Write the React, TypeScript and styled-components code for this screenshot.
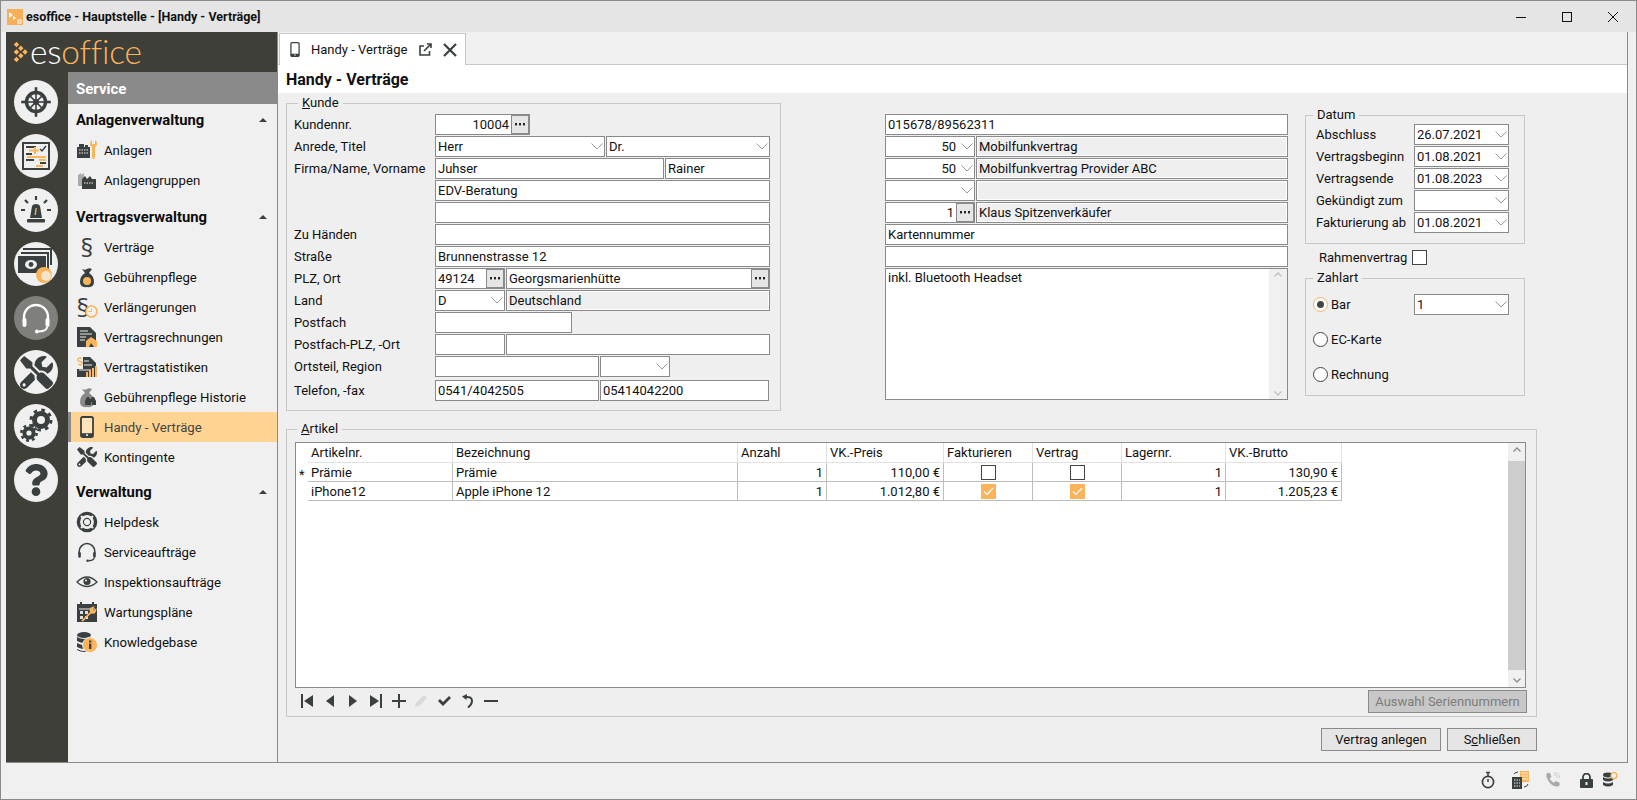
import React from 'react';
import styled, { createGlobalStyle } from 'styled-components';
import { FaTools, FaQuestion } from 'react-icons/fa';

const INK = '#3a3f3f';
const ORANGE = '#fbb45c';

const Global = createGlobalStyle`
  html, body { margin: 0; padding: 0; background: #f0f0f0; }
  * { box-sizing: border-box; }
  body { font-family: Roboto, "Liberation Sans", sans-serif; font-size: 13px; color: #111; }
`;

const Win = styled.div`
  width: 1637px; height: 800px; border: 1px solid #8a8a8a; display: flex; flex-direction: column;
  overflow: hidden; background: #f0f0f0;
`;
const TitleBar = styled.div`
  height: 31px; flex: none; background: #e5e5e5; display: flex; align-items: center; padding-left: 6px;
`;
const TitleText = styled.div`
  font-weight: 700; font-size: 12.5px; margin-left: 3px; flex: 1; white-space: nowrap;
`;
const WinBtn = styled.div`
  width: 46px; height: 31px; display: flex; align-items: center; justify-content: center;
`;
const Body = styled.div`
  height: 731px; flex: none; margin: 0 8px 0 5px; display: flex; border-bottom: 1px solid #8a8a8a;
`;
const Sidebar = styled.div`
  width: 271px; flex: none; display: flex; flex-direction: column; background: #3f3f3a;
`;
const LogoBar = styled.div`
  height: 40px; flex: none; display: flex; align-items: center; padding-left: 8px; gap: 2px;
`;
const LogoText = styled.div`
  font-family: Lato, "Open Sans", sans-serif; font-weight: 300; font-size: 33.5px; line-height: 40px; color: ${ORANGE};
  letter-spacing: -0.2px; margin-top: -2px;
  span { color: #fff; }
`;
const SideBody = styled.div` flex: 1; display: flex; min-height: 0; `;
const Rail = styled.div`
  width: 62px; flex: none; padding: 8px 0 0 8px; display: flex; flex-direction: column; gap: 10px;
`;
const RailBtn = styled.div<{ $active?: boolean }>`
  width: 44px; height: 44px; border-radius: 50%; display: flex; align-items: center; justify-content: center;
  background: ${p => (p.$active ? '#7f7f7b' : '#f0f0f0')}; color: ${INK}; font-size: 30px;
`;
const Nav = styled.div` flex: 1; background: #f0f0f0; display: flex; flex-direction: column; `;
const NavHead = styled.div`
  height: 32px; flex: none; background: #8a8a8a; color: #fff; font-weight: 700; font-size: 15px;
  display: flex; align-items: center; padding: 2px 0 0 8px;
`;
const Section = styled.div<{ $mt: number }>`
  height: 30px; flex: none; display: flex; align-items: center; justify-content: space-between;
  padding: 0 10px 0 8px; font-weight: 700; font-size: 14.8px; color: #0d0d0d; margin-top: ${p => p.$mt}px;
  &::after { content: ''; border-left: 4px solid transparent; border-right: 4px solid transparent; border-bottom: 4px solid ${INK}; }
`;
const Item = styled.div<{ $active?: boolean }>`
  height: 30px; flex: none; display: flex; align-items: center; padding-left: 8px; gap: 6px; font-size: 13.2px;
  background: ${p => (p.$active ? '#ffd391' : 'transparent')};
  box-shadow: ${p => (p.$active ? 'inset 3px 0 0 #8a8a8a' : 'none')};
  color: ${p => (p.$active ? '#444' : '#111')};
`;
const ItemIcon = styled.span`
  position: relative; width: 22px; height: 24px; flex: none; display: flex; align-items: center; justify-content: center; color: ${INK}; font-size: 21px;
`;
const Para = styled.span<{ $shift?: boolean }>`
  font-family: "Open Sans", sans-serif; font-size: 25px; line-height: 24px; color: ${INK}; margin-left: ${p => (p.$shift ? -8 : 0)}px;
`;
const ClockBadge = styled.svg`
  position: absolute; right: 0; bottom: 1px;
`;

const Main = styled.div`
  flex: 1; display: flex; flex-direction: column; border-left: 1px solid #8a8a8a; border-right: 1px solid #8a8a8a; min-width: 0;
`;
const TabStrip = styled.div`
  height: 33px; flex: none; border-bottom: 1px solid #c8c8c8; padding: 1px 0 0 1px; display: flex;
`;
const Tab = styled.div`
  width: 187px; height: 32px; background: #fff; border: 1px solid #c8c8c8; border-bottom: none; display: flex; align-items: center;
  padding-left: 10px; font-size: 13px;
`;
const TabLabel = styled.span` margin-left: 11px; margin-right: 12px; white-space: nowrap; `;
const TabClose = styled.svg` margin-left: 11px; `;
const PageTitle = styled.div`
  height: 28px; flex: none; background: #fff; padding-left: 8px; font-weight: 700; font-size: 16px; display: flex; align-items: center;
`;
const Content = styled.div`
  flex: 1; background: #efefef; padding: 10px 90px 0 8px; display: flex; flex-direction: column; min-height: 0;
`;
const TopRow = styled.div` display: flex; align-items: flex-start; flex: none; `;

const Group = styled.div<{ $w: number; $h: number }>`
  position: relative; width: ${p => p.$w}px; height: ${p => p.$h}px; flex: none; border: 1px solid #c8c8c8;
`;
const Legend = styled.div<{ $l: number }>`
  position: absolute; top: -9px; left: ${p => p.$l}px; padding: 0 4px; height: 16px; line-height: 16px; background: #efefef; font-size: 13px;
`;
const Stack = styled.div<{ $pt: number; $pl: number }>`
  display: flex; flex-direction: column; gap: 1px; padding: ${p => p.$pt}px 0 0 ${p => p.$pl}px;
`;
const Row = styled.div<{ $mt?: number }>`
  display: flex; gap: 1px; height: 21px; flex: none; align-items: stretch; margin-top: ${p => p.$mt ?? 0}px;
`;
const Label = styled.div<{ $w: number }>`
  width: ${p => p.$w}px; flex: none; display: flex; align-items: center; white-space: nowrap; font-size: 13px;
`;
const Field = styled.div<{ $w?: number; $ro?: boolean }>`
  ${p => (p.$w ? `width:${p.$w}px; flex:none;` : 'flex:1;')}
  height: 21px; border: 1px solid #8a8a8a; background: ${p => (p.$ro ? '#efefef' : '#fff')};
  box-shadow: ${p => (p.$ro ? 'inset 0 0 0 1px #fff' : 'none')};
  display: flex; align-items: center; padding-left: 2px; font-size: 13px; white-space: nowrap; overflow: hidden;
`;
const FieldText = styled.span<{ $right?: boolean }>`
  flex: 1; text-align: ${p => (p.$right ? 'right' : 'left')}; min-width: 0;
`;
const More = styled.span`
  width: 18px; height: 19px; flex: none; margin-left: 2px; background: #e6e6e6; border: 1px solid #8a8a8a;
  display: flex; align-items: center; justify-content: center;
`;
const Chev = styled.svg` flex: none; margin: 0 1px 0 5px; `;

const MidCol = styled.div`
  width: 403px; flex: none; margin: 11px 0 0 104px; display: flex; flex-direction: column; gap: 1px;
`;
const TextArea = styled.div`
  height: 132px; border: 1px solid #8a8a8a; background: #fff; display: flex; margin-top: 0;
`;
const AreaText = styled.div` flex: 1; padding: 1px 2px; `;
const VBar = styled.div<{ $w: number }>`
  width: ${p => p.$w}px; flex: none; background: #f0f0f0; display: flex; flex-direction: column; align-items: center; justify-content: space-between; padding: 3px 0;
`;
const RightCol = styled.div`
  width: 220px; flex: none; margin: 12px 0 0 17px; display: flex; flex-direction: column;
`;
const CheckRow = styled.div`
  height: 15px; margin: 6px 0 13px; padding-left: 14px; display: flex; align-items: center;
`;
const Box = styled.span<{ $on?: boolean }>`
  width: 15px; height: 15px; flex: none; display: inline-flex; align-items: center; justify-content: center;
  border: 1px solid ${p => (p.$on ? ORANGE : '#444')}; background: ${p => (p.$on ? ORANGE : '#fff')};
`;
const RadioStack = styled.div`
  display: flex; flex-direction: column; gap: 14px; padding: 15px 0 0 7px;
`;
const RadioRow = styled.div` display: flex; align-items: center; height: 21px; `;
const Radio = styled.span<{ $on?: boolean }>`
  width: 15px; height: 15px; flex: none; border-radius: 50%; background: #fff; margin-right: 3px;
  border: 1px solid ${p => (p.$on ? ORANGE : '#444')}; display: flex; align-items: center; justify-content: center;
  &::after { content: ''; width: 7px; height: 7px; border-radius: 50%; background: ${p => (p.$on ? '#444' : 'transparent')}; }
`;

const ArtGroup = styled(Group)` margin-top: 18px; padding: 12px 0 0 8px; display: flex; flex-direction: column; `;
const TableBox = styled.div`
  width: 1231px; height: 246px; flex: none; border: 1px solid #8a8a8a; background: #fff; display: flex;
`;
const TableArea = styled.div` flex: 1; min-width: 0; `;
const GridRow = styled.div<{ $h: number }>`
  display: grid; grid-template-columns: 12px 145px 285px 89px 117px 89px 89px 104px 116px; width: 1046px; height: ${p => p.$h}px;
`;
const Cell = styled.div<{ $right?: boolean; $center?: boolean; $head?: boolean; $stub?: boolean }>`
  display: flex; align-items: center; padding: 0 3px; white-space: nowrap; font-size: 13px;
  justify-content: ${p => (p.$right ? 'flex-end' : p.$center ? 'center' : 'flex-start')};
  border-right: ${p => (p.$stub ? 'none' : p.$head ? '1px solid #e2e2e2' : '1px solid #bdbdbd')};
  border-bottom: ${p => (p.$stub ? 'none' : p.$head ? '1px solid #e2e2e2' : '1px solid #bdbdbd')};
`;
const Stub = styled(Cell)` padding: 4px 0 0 3px; `;
const Thumb = styled.div` width: 17px; height: 209px; background: #cdcdcd; margin: 0; `;
const ScrollCol = styled.div`
  width: 17px; flex: none; background: #f0f0f0; display: flex; flex-direction: column; align-items: center; padding: 4px 0; justify-content: space-between;
`;
const ToolRow = styled.div`
  height: 25px; flex: none; display: flex; align-items: center; margin-top: 1px; width: 1232px;
`;
const ToolIcon = styled.span` width: 23px; height: 23px; flex: none; margin-top: -2px; display: flex; align-items: center; justify-content: center; `;
const Spacer = styled.div` flex: 1; `;
const Button = styled.button<{ $w: number; $off?: boolean }>`
  width: ${p => p.$w}px; height: 23px; flex: none; border: 1px solid #8a8a8a; padding: 0; font: inherit; font-size: 13px;
  background: ${p => (p.$off ? '#c8c8c8' : '#e5e5e5')}; color: ${p => (p.$off ? '#7c7c7c' : '#111')};
`;
const Actions = styled.div` display: flex; justify-content: flex-end; gap: 6px; margin-top: 11px; `;
const StatusBar = styled.div`
  flex: 1; display: flex; justify-content: flex-end; align-items: center; padding: 0 16px 2px 0;
`;
const StatusIcon = styled.span<{ $w: number }>`
  width: ${p => p.$w}px; flex: none; display: flex; justify-content: center; align-items: center;
`;

const Chevron = () => (
  <Chev width="12" height="7" viewBox="0 0 12 7"><polyline points="0.5,0.5 6,6 11.5,0.5" fill="none" stroke="#9a9a9a" /></Chev>
);
const Dots = () => (
  <svg width="10" height="3" viewBox="0 0 10 3"><rect x="0" y="0" width="2" height="2.4" fill="#222" /><rect x="4" y="0" width="2" height="2.4" fill="#222" /><rect x="8" y="0" width="2" height="2.4" fill="#222" /></svg>
);
const Sel = ({ w, text, right }: { w?: number; text?: string; right?: boolean }) => (
  <Field $w={w}><FieldText $right={right}>{text}</FieldText><Chevron /></Field>
);
const Txt = ({ w, text, ro }: { w?: number; text?: string; ro?: boolean }) => (
  <Field $w={w} $ro={ro}><FieldText>{text}</FieldText></Field>
);
const Mor = ({ w, text, right }: { w?: number; text: string; right?: boolean }) => (
  <Field $w={w}><FieldText $right={right}>{text}</FieldText><More><Dots /></More></Field>
);
const Chk = ({ on }: { on?: boolean }) => (
  <Box $on={on}>{on && <svg width="11" height="9" viewBox="0 0 11 9"><polyline points="1,4.5 4,7.5 10,1" fill="none" stroke="#fff" strokeWidth="1.2" /></svg>}</Box>
);

/* ---------- drawn icons ---------- */
const I = ({ children, s = 22, v = 22 }: { children: React.ReactNode; s?: number; v?: number }) => (
  <svg width={s} height={s} viewBox={`0 0 ${v} ${v}`}>{children}</svg>
);
const Logo = () => (
  <svg width="14" height="20" viewBox="0 0 14 20" fill={ORANGE}>
    {[[2.5, 2.5], [2.5, 10], [2.5, 17.5], [6.8, 6.2], [6.8, 13.8], [11, 10]].map(([x, y], i) => (
      <rect key={i} x={x - 1.9} y={y - 1.9} width="3.8" height="3.8" transform={`rotate(45 ${x} ${y})`} />
    ))}
  </svg>
);
const AppIcon = () => (
  <svg width="16" height="16" viewBox="0 0 16 16"><rect width="16" height="16" fill="#f6ae58" /><path d="M2 3l4 3-4 3zM6 7l3 2-3 2z" fill="#fff" /><rect x="11" y="11" width="3" height="3" fill="none" stroke="#fff" /></svg>
);
const WheelIcon = () => (
  <I s={32} v={32}>
    <circle cx="16" cy="16" r="9.5" fill="none" stroke={INK} strokeWidth="3.4" />
    <circle cx="16" cy="16" r="3" fill={INK} />
    {[0, 45, 90, 135, 180, 225, 270, 315].map(a => (
      <g key={a} transform={`rotate(${a} 16 16)`}>
        <path d="M16 16V7" stroke={INK} strokeWidth="1.6" />
        <path d="M16 6V1.2" stroke={INK} strokeWidth={a % 90 === 0 ? 2.6 : 0} />
      </g>
    ))}
  </I>
);
const BoardIcon = () => (
  <I s={30} v={30}>
    <rect x="2" y="2" width="26" height="26" fill="none" stroke={INK} strokeWidth="2" />
    <path d="M5 6h10M5 13h6M5 19h8M19 22h6" stroke={INK} strokeWidth="2" />
    <path d="M8 9.5h10M14 6v7M6 16h19M18 19h7M15 25h7" stroke={ORANGE} strokeWidth="2" fill="none" />
    <path d="M19 8l2 2 4-5" stroke={INK} strokeWidth="1.5" fill="none" />
  </I>
);
const SirenIcon = () => (
  <I s={34} v={34}>
    <path d="M11 25l2-12q1-2 4-2t4 2l2 12z" fill={INK} />
    <path d="M15.5 22l1-7h1.4l-1 7z" fill="#e8b36a" />
    <rect x="8" y="26" width="18" height="3.5" rx="1" fill={INK} />
    <path d="M17 3v4M6 7l3 3M28 7l-3 3M2 17h4M28 17h4" stroke={INK} strokeWidth="2.2" />
  </I>
);
const MoneyIcon = () => (
  <I s={40} v={40}>
    <path d="M7 4h29v17h-2V6H7z" fill={INK} />
    <path d="M5 8h28v17h-2V10H5z" fill={INK} />
    <rect x="2" y="12" width="28" height="17" fill={INK} />
    <ellipse cx="15" cy="20.5" rx="6" ry="4.5" fill="#f0f0f0" />
    <circle cx="15" cy="20.5" r="2.4" fill={INK} />
    <circle cx="28" cy="31" r="8" fill={ORANGE} />
    <circle cx="30" cy="32" r="5" fill="#f6e4c8" />
  </I>
);
const HeadsetIcon = ({ color = '#fff', s = 34 }: { color?: string; s?: number }) => (
  <I s={s} v={34}>
    <path d="M5 21V16a12 12 0 0 1 24 0v5" fill="none" stroke={color} strokeWidth="2.4" />
    <rect x="3.5" y="17" width="4" height="9" rx="2" fill={color} />
    <rect x="26.5" y="17" width="4" height="9" rx="2" fill={color} />
    <path d="M28 26q0 4-8 4.5" fill="none" stroke={color} strokeWidth="2" />
    <circle cx="18" cy="30.5" r="2" fill={color} />
  </I>
);
const GearsIcon = () => (
  <I s={36} v={36}>
    <circle cx="23" cy="12" r="6.5" fill="none" stroke={INK} strokeWidth="5" />
    <circle cx="23" cy="12" r="10" fill="none" stroke={INK} strokeWidth="3" strokeDasharray="3.6 4.25" />
    <circle cx="11" cy="25" r="4.6" fill="none" stroke={INK} strokeWidth="4" />
    <circle cx="11" cy="25" r="7.6" fill="none" stroke={INK} strokeWidth="2.6" strokeDasharray="2.8 3.17" />
  </I>
);
const RegisterIcon = () => (
  <I>
    <rect x="1" y="8" width="13" height="11" fill={INK} />
    <rect x="3" y="5" width="5" height="3" fill={INK} />
    <rect x="9" y="6" width="3" height="2" fill={INK} />
    <path d="M3 11h9M3 14h9" stroke="#eee" strokeDasharray="1.5 1" />
    <path d="M16 8v10q0 2 1.5 2t1.5-2V8q2-1 2-3.5T19 1v4h-3V1q-2 1-2 3.5T16 8z" fill={ORANGE} />
  </I>
);
const GroupIcon = () => (
  <I>
    <path d="M2 6l3-2v13H2zM5 6l3-2v13H5z" fill="#aaa" />
    <path d="M6 10l3-3 2 3 3-3 2 3h4v10H6z" fill={INK} />
    <path d="M8 14h10" stroke="#eee" strokeDasharray="1.5 1" />
  </I>
);
const BagIcon = ({ body = INK }: { body?: string }) => (
  <path d="M6 3q3 1.5 5 0t5 0l-3 4q5 3 5 9t-7 5q-7 1-7-5t5-9z" fill={body} />
);
const FeeIcon = () => (
  <I>
    <BagIcon />
    <circle cx="11" cy="15" r="4" fill={ORANGE} />
  </I>
);
const InvoiceIcon = () => (
  <I>
    <path d="M1 1h13l6 6v14H1z" fill={INK} />
    <path d="M4 5h8M4 8h12M4 11h6M4 14h5" stroke="#f0f0f0" />
    <path d="M10 21v-6l5-4 6 4v6h-3l-3-4-2 4z" fill={ORANGE} />
  </I>
);
const StatIcon = () => (
  <I>
    <path d="M1 1h13l6 6v14H1z" fill={INK} />
    <rect x="1" y="1" width="6" height="12" fill="#f0f0f0" />
    <path d="M6 3q-3-2-4 0t2 2.5 2 2.5-4 0" fill="none" stroke={ORANGE} strokeWidth="1.4" />
    <path d="M8 5h5M8 9h8M3 14h12" stroke="#f0f0f0" />
    <path d="M10 16h2v5h-2zM13 14h2v7h-2zM16 12h2v9h-2zM19 10h2v11h-2z" fill={ORANGE} />
  </I>
);
const HistIcon = () => (
  <I>
    <BagIcon body="#8a8a8a" />
    <path d="M9 19v-4l2-4h2l1 2h1l1-2h2l2 4v4h-4v-3h-1v3z" fill={INK} />
  </I>
);
const PhoneIcon = ({ fill = '#ffe4b9', w = 14, h = 22 }: { fill?: string; w?: number; h?: number }) => (
  <svg width={w} height={h} viewBox="0 0 14 22">
    <rect x="1" y="1" width="12" height="20" rx="1.6" fill={fill} stroke={INK} strokeWidth="1.8" />
    <rect x="1" y="17.2" width="12" height="3.8" fill={INK} />
    <circle cx="7" cy="19.1" r="1" fill="#fff" />
  </svg>
);
const BuoyIcon = () => (
  <I>
    <circle cx="11" cy="11" r="8.6" fill="none" stroke={INK} strokeWidth="3.4" />
    <circle cx="11" cy="11" r="3.6" fill="#f0f0f0" stroke={INK} strokeWidth="1.2" />
    <path d="M5 5l3 3M17 5l-3 3M5 17l3-3M17 17l-3-3" stroke="#f0f0f0" strokeWidth="2" />
  </I>
);
const EyeIcon = () => (
  <I>
    <path d="M1 11q10-10 20 0q-10 9-20 0z" fill="none" stroke={INK} strokeWidth="1.3" />
    <circle cx="11" cy="10.5" r="3.6" fill={INK} />
    <circle cx="10" cy="9.4" r="1" fill="#f0f0f0" />
  </I>
);
const PlanIcon = () => (
  <I>
    <rect x="1" y="3" width="20" height="18" fill={INK} />
    <path d="M5 1v3M17 1v3" stroke={INK} strokeWidth="2" />
    <path d="M3 8h16" stroke="#f0f0f0" />
    <path d="M4 10h3v3H4zM9 10h3v3H9zM4 15h3v3H4zM9 15h3v3H9z" fill="#ddd" />
    <path d="M5 20l9-9q-1-3 1-4.5t4-1l-2.5 2.5 1.5 1.5 2.5-2.5q.5 2.5-1 4.5t-4.5 1l-8 8z" fill={ORANGE} />
  </I>
);
const KnowIcon = () => (
  <I>
    <ellipse cx="8" cy="4" rx="7" ry="3" fill={INK} />
    <path d="M1 6q7 4 14 0v4q-7 4-14 0zM1 12q7 4 14 0v4q-7 4-14 0zM1 18q7 4 14 0v1q-7 4-14 0z" fill={INK} />
    <circle cx="14" cy="14" r="7.5" fill={ORANGE} stroke="#f0f0f0" strokeWidth=".8" />
    <rect x="13" y="12.5" width="2.4" height="5.5" fill={INK} />
    <rect x="13" y="9.5" width="2.4" height="2" fill={INK} />
  </I>
);

const tools: React.ReactNode[] = [
  <I s={14} v={14}><rect x="1" y="0" width="2" height="14" fill={INK} /><path d="M13 1v12L4 7z" fill={INK} /></I>,
  <I s={14} v={14}><path d="M11 1v12L3 7z" fill={INK} /></I>,
  <I s={14} v={14}><path d="M3 1v12l8-6z" fill={INK} /></I>,
  <I s={14} v={14}><rect x="11" y="0" width="2" height="14" fill={INK} /><path d="M1 1v12l9-6z" fill={INK} /></I>,
  <I s={14} v={14}><path d="M0 6h14v2H0zM6 0h2v14H6z" fill={INK} /></I>,
  <I s={15} v={15}><path d="M1 14l1-4 8-8 3 3-8 8z" fill="#d9d9d9" /></I>,
  <I s={15} v={15}><path d="M1 8l2-2 3 3 6-6 2 2-8 8z" fill={INK} /></I>,
  <I s={14} v={14}><path d="M1 2.5L6 0l-.5 6z" fill={INK} /><path d="M4.5 3Q11 2.2 11 7 11 10.5 7 13.5" fill="none" stroke={INK} strokeWidth="2" /></I>,
  <I s={14} v={14}><rect y="6" width="14" height="2" fill={INK} /></I>,
];

type Col = { t?: string; r?: boolean; c?: 'on' | 'off' };
const rows: Col[][] = [
  [{ t: 'Prämie' }, { t: 'Prämie' }, { t: '1', r: true }, { t: '110,00 €', r: true }, { c: 'off' }, { c: 'off' }, { t: '1', r: true }, { t: '130,90 €', r: true }],
  [{ t: 'iPhone12' }, { t: 'Apple iPhone 12' }, { t: '1', r: true }, { t: '1.012,80 €', r: true }, { c: 'on' }, { c: 'on' }, { t: '1', r: true }, { t: '1.205,23 €', r: true }],
];
const heads = ['Artikelnr.', 'Bezeichnung', 'Anzahl', 'VK.-Preis', 'Fakturieren', 'Vertrag', 'Lagernr.', 'VK.-Brutto'];
const dates: [string, string][] = [['Abschluss', '26.07.2021'], ['Vertragsbeginn', '01.08.2021'], ['Vertragsende', '01.08.2023'], ['Gekündigt zum', ''], ['Fakturierung ab', '01.08.2021']];

export default function App() {
  return (
    <>
      <Global />
      <Win>
        <TitleBar>
          <AppIcon />
          <TitleText>esoffice - Hauptstelle - [Handy - Verträge]</TitleText>
          <WinBtn><svg width="10" height="10" viewBox="0 0 10 10"><rect y="5" width="10" height="1" fill="#111" /></svg></WinBtn>
          <WinBtn><svg width="10" height="10" viewBox="0 0 10 10"><rect x=".5" y=".5" width="9" height="9" fill="none" stroke="#111" /></svg></WinBtn>
          <WinBtn><svg width="10" height="10" viewBox="0 0 10 10"><path d="M0 0l10 10M10 0L0 10" stroke="#111" /></svg></WinBtn>
        </TitleBar>
        <Body>
          <Sidebar>
            <LogoBar><Logo /><LogoText><span>es</span>office</LogoText></LogoBar>
            <SideBody>
              <Rail>
                <RailBtn><WheelIcon /></RailBtn>
                <RailBtn><BoardIcon /></RailBtn>
                <RailBtn><SirenIcon /></RailBtn>
                <RailBtn><MoneyIcon /></RailBtn>
                <RailBtn $active><HeadsetIcon /></RailBtn>
                <RailBtn><FaTools size={33} /></RailBtn>
                <RailBtn><GearsIcon /></RailBtn>
                <RailBtn><FaQuestion size={32} /></RailBtn>
              </Rail>
              <Nav>
                <NavHead>Service</NavHead>
                <Section $mt={1}>Anlagenverwaltung</Section>
                <Item><ItemIcon><RegisterIcon /></ItemIcon>Anlagen</Item>
                <Item><ItemIcon><GroupIcon /></ItemIcon>Anlagengruppen</Item>
                <Section $mt={7}>Vertragsverwaltung</Section>
                <Item><ItemIcon><Para>§</Para></ItemIcon>Verträge</Item>
                <Item><ItemIcon><FeeIcon /></ItemIcon>Gebührenpflege</Item>
                <Item>
                  <ItemIcon>
                    <Para $shift>§</Para>
                    <ClockBadge width="13" height="13" viewBox="0 0 13 13">
                      <circle cx="6.5" cy="6.5" r="5.5" fill="#f0f0f0" stroke={ORANGE} strokeWidth="1.6" />
                      <path d="M6.5 3.5v3h-3" stroke={ORANGE} fill="none" />
                    </ClockBadge>
                  </ItemIcon>
                  Verlängerungen
                </Item>
                <Item><ItemIcon><InvoiceIcon /></ItemIcon>Vertragsrechnungen</Item>
                <Item><ItemIcon><StatIcon /></ItemIcon>Vertragstatistiken</Item>
                <Item><ItemIcon><HistIcon /></ItemIcon>Gebührenpflege Historie</Item>
                <Item $active><ItemIcon><PhoneIcon /></ItemIcon>Handy - Verträge</Item>
                <Item><ItemIcon><FaTools size={20} /></ItemIcon>Kontingente</Item>
                <Section $mt={5}>Verwaltung</Section>
                <Item><ItemIcon><BuoyIcon /></ItemIcon>Helpdesk</Item>
                <Item><ItemIcon><HeadsetIcon color={INK} s={24} /></ItemIcon>Serviceaufträge</Item>
                <Item><ItemIcon><EyeIcon /></ItemIcon>Inspektionsaufträge</Item>
                <Item><ItemIcon><PlanIcon /></ItemIcon>Wartungspläne</Item>
                <Item><ItemIcon><KnowIcon /></ItemIcon>Knowledgebase</Item>
              </Nav>
            </SideBody>
          </Sidebar>
          <Main>
            <TabStrip>
              <Tab>
                <PhoneIcon fill="#fff" w={10} h={15} />
                <TabLabel>Handy - Verträge</TabLabel>
                <svg width="13" height="13" viewBox="0 0 13 13" fill="none" stroke={INK} strokeWidth="1.6"><path d="M10.5 8v4h-9.5V3h4" /><path d="M5 8l7-7M8 1h4v4" /></svg>
                <TabClose width="14" height="14" viewBox="0 0 14 14"><path d="M1 1l12 12M13 1L1 13" stroke={INK} strokeWidth="2.2" /></TabClose>
              </Tab>
            </TabStrip>
            <PageTitle>Handy - Verträge</PageTitle>
            <Content>
              <TopRow>
                <Group $w={495} $h={308}>
                  <Legend $l={11}><u>K</u>unde</Legend>
                  <Stack $pt={10} $pl={7}>
                    <Row><Label $w={140}>Kundennr.</Label><Mor w={95} text="10004" right /></Row>
                    <Row><Label $w={140}>Anrede, Titel</Label><Sel w={170} text="Herr" /><Sel w={164} text="Dr." /></Row>
                    <Row><Label $w={140}>Firma/Name, Vorname</Label><Txt w={229} text="Juhser" /><Txt w={105} text="Rainer" /></Row>
                    <Row><Label $w={140} /><Txt w={335} text="EDV-Beratung" /></Row>
                    <Row><Label $w={140} /><Txt w={335} /></Row>
                    <Row><Label $w={140}>Zu Händen</Label><Txt w={335} /></Row>
                    <Row><Label $w={140}>Straße</Label><Txt w={335} text="Brunnenstrasse 12" /></Row>
                    <Row><Label $w={140}>PLZ, Ort</Label><Mor w={70} text="49124" /><Mor w={264} text="Georgsmarienhütte" /></Row>
                    <Row><Label $w={140}>Land</Label><Sel w={70} text="D" /><Txt w={264} text="Deutschland" ro /></Row>
                    <Row><Label $w={140}>Postfach</Label><Txt w={137} /></Row>
                    <Row><Label $w={140}>Postfach-PLZ, -Ort</Label><Txt w={70} /><Txt w={264} /></Row>
                    <Row><Label $w={140}>Ortsteil, Region</Label><Txt w={164} /><Sel w={70} /></Row>
                    <Row $mt={2}><Label $w={140}>Telefon, -fax</Label><Txt w={164} text="0541/4042505" /><Txt w={169} text="05414042200" /></Row>
                  </Stack>
                </Group>
                <MidCol>
                  <Row><Txt text="015678/89562311" /></Row>
                  <Row><Sel w={90} text="50" right /><Txt text="Mobilfunkvertrag" ro /></Row>
                  <Row><Sel w={90} text="50" right /><Txt text="Mobilfunkvertrag Provider ABC" ro /></Row>
                  <Row><Sel w={90} /><Txt ro /></Row>
                  <Row><Mor w={90} text="1" right /><Txt text="Klaus Spitzenverkäufer" ro /></Row>
                  <Row><Txt text="Kartennummer" /></Row>
                  <Row><Txt /></Row>
                  <TextArea>
                    <AreaText>inkl. Bluetooth Headset</AreaText>
                    <VBar $w={18}>
                      <svg width="8" height="5" viewBox="0 0 8 5"><polyline points="0.5,4.5 4,1 7.5,4.5" fill="none" stroke="#c0c0c0" strokeWidth="1.3" /></svg>
                      <svg width="8" height="5" viewBox="0 0 8 5"><polyline points="0.5,0.5 4,4 7.5,0.5" fill="none" stroke="#c0c0c0" strokeWidth="1.3" /></svg>
                    </VBar>
                  </TextArea>
                </MidCol>
                <RightCol>
                  <Group $w={220} $h={129}>
                    <Legend $l={7}>Datum</Legend>
                    <Stack $pt={8} $pl={10}>
                      {dates.map(([l, v]) => (
                        <Row key={l}><Label $w={97}>{l}</Label><Sel w={95} text={v} /></Row>
                      ))}
                    </Stack>
                  </Group>
                  <CheckRow><Label $w={93}>Rahmenvertrag</Label><Chk /></CheckRow>
                  <Group $w={220} $h={118}>
                    <Legend $l={7}>Zahlart</Legend>
                    <RadioStack>
                      <RadioRow><Radio $on /><Label $w={83}>Bar</Label><Sel w={95} text="1" /></RadioRow>
                      <RadioRow><Radio /><Label $w={83}>EC-Karte</Label></RadioRow>
                      <RadioRow><Radio /><Label $w={83}>Rechnung</Label></RadioRow>
                    </RadioStack>
                  </Group>
                </RightCol>
              </TopRow>
              <ArtGroup $w={1251} $h={288}>
                <Legend $l={10}><u>A</u>rtikel</Legend>
                <TableBox>
                  <TableArea>
                    <GridRow $h={20}>
                      <Cell $stub />
                      {heads.map(h => <Cell key={h} $head>{h}</Cell>)}
                    </GridRow>
                    {rows.map((r, i) => (
                      <GridRow key={i} $h={19}>
                        <Stub $stub>{i === 0 ? '*' : ''}</Stub>
                        {r.map((c, j) => (
                          <Cell key={j} $right={c.r} $center={!!c.c}>
                            {c.c ? <Chk on={c.c === 'on'} /> : c.t}
                          </Cell>
                        ))}
                      </GridRow>
                    ))}
                  </TableArea>
                  <ScrollCol>
                    <svg width="8" height="5" viewBox="0 0 8 5"><polyline points="0.5,4.5 4,1 7.5,4.5" fill="none" stroke="#8a8a8a" strokeWidth="1.3" /></svg>
                    <Thumb />
                    <svg width="8" height="5" viewBox="0 0 8 5"><polyline points="0.5,0.5 4,4 7.5,0.5" fill="none" stroke="#8a8a8a" strokeWidth="1.3" /></svg>
                  </ScrollCol>
                </TableBox>
                <ToolRow>
                  {tools.map((t, i) => <ToolIcon key={i}>{t}</ToolIcon>)}
                  <Spacer />
                  <Button $w={159} $off>Auswahl Seriennummern</Button>
                </ToolRow>
              </ArtGroup>
              <Actions>
                <Button $w={120}>Vertrag anlegen</Button>
                <Button $w={90}>S<u>c</u>hließen</Button>
              </Actions>
            </Content>
          </Main>
        </Body>
        <StatusBar>
          <StatusIcon $w={40}>
            <svg width="14" height="18" viewBox="0 0 14 18" fill="none" stroke={INK}><circle cx="7" cy="11" r="5.6" strokeWidth="1.6" /><path d="M5 1.5h4M7 2v3M7 8v3" strokeWidth="1.5" /></svg>
          </StatusIcon>
          <StatusIcon $w={26}>
            <svg width="20" height="20" viewBox="0 0 20 20"><rect x="9" y="1" width="9" height="11" fill={ORANGE} /><path d="M10 3h7M10 6h7M10 9h7" stroke="#fff" strokeWidth=".8" /><rect x="1" y="7" width="10" height="12" fill={INK} /><path d="M3 10h6M3 13h6M3 16h6" stroke="#eee" strokeDasharray="1.5 1" /><path d="M3 4q2-2 4-2M13 17q3 0 4-3" stroke={INK} fill="none" /></svg>
          </StatusIcon>
          <StatusIcon $w={38}>
            <svg width="16" height="16" viewBox="0 0 16 16"><path d="M2 1l3 0 1.5 4-2 1.5q1.5 3 4.5 4.5l1.5-2 4 1.5 0 3q-1 1-3 1Q5 14 1.5 5 1 3 2 1z" fill="#a8a8a8" /><path d="M9 3q3 0 4 3M9 1q5 0 6 5" fill="none" stroke="#ccc" /></svg>
          </StatusIcon>
          <StatusIcon $w={28}>
            <svg width="13" height="15" viewBox="0 0 13 15"><rect y="6" width="13" height="9" rx="1" fill={INK} /><path d="M3 6V4a3.5 3.5 0 0 1 7 0v2" fill="none" stroke={INK} strokeWidth="1.8" /><rect x="5.5" y="9" width="2" height="3" fill="#eee" /></svg>
          </StatusIcon>
          <StatusIcon $w={20}>
            <svg width="16" height="16" viewBox="0 0 16 16"><ellipse cx="6" cy="3" rx="5" ry="2.4" fill={INK} /><path d="M1 5q5 3 10 0v3q-5 3-10 0zM1 10q5 3 10 0v3q-5 3-10 0z" fill={INK} /><circle cx="12" cy="3.5" r="3" fill="#f0f0f0" stroke={ORANGE} strokeWidth="1.4" /></svg>
          </StatusIcon>
        </StatusBar>
      </Win>
    </>
  );
}
